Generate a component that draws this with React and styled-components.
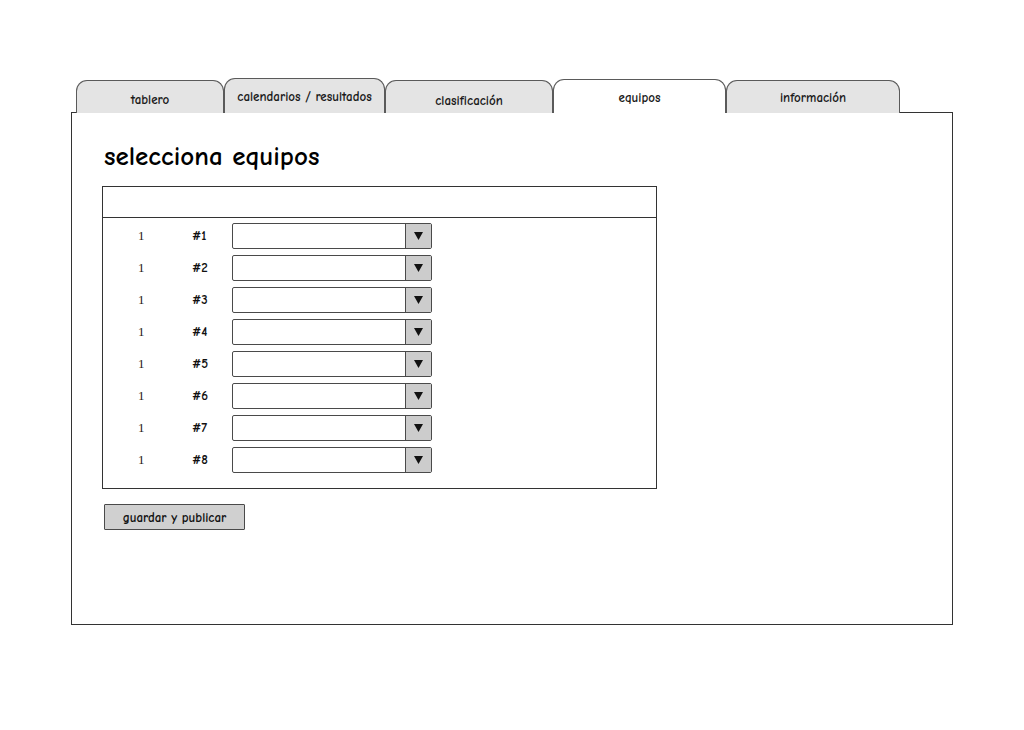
import React from "react";
import styled, { createGlobalStyle } from "styled-components";

const Global = createGlobalStyle`
  html, body { margin: 0; padding: 0; background: #fff; }
  body { font-family: "Comic Sans MS", "Comic Neue", "DejaVu Sans", sans-serif; color: #111; }
`;

const Page = styled.div`
  width: 1024px;
  height: 730px;
  padding: 79px 0 0 71px;
  box-sizing: border-box;
`;

const TabBar = styled.div`
  display: flex;
  align-items: flex-end;
  height: 34px;
  padding-left: 5px;
  position: relative;
  z-index: 1;
  margin-bottom: -1px;
`;

const Tab = styled.div`
  box-sizing: border-box;
  width: ${(p) => p.$w}px;
  height: ${(p) => 33 + p.$lift}px;
  border: 1px solid #5a5a5a;
  border-bottom: none;
  border-radius: 11px 11px 0 0;
  background: ${(p) => (p.$active ? "#ffffff" : "#e4e4e4")};
  font-size: 13px;
  font-weight: 700;
  text-align: center;
  padding-top: ${(p) => p.$text}px;
  color: #1a1a1a;
  white-space: nowrap;
`;

const Panel = styled.div`
  box-sizing: border-box;
  width: 882px;
  height: 513px;
  border: 1px solid #333;
  padding: 29px 0 0 30px;
`;

const Title = styled.h1`
  margin: 0 0 14px 2px;
  font-size: 27px;
  font-weight: 700;
  line-height: 30px;
  color: #000;
`;

const TableBox = styled.div`
  box-sizing: border-box;
  width: 555px;
  height: 303px;
  border: 1px solid #333;
`;

const TableHeader = styled.div`
  height: 30px;
  border-bottom: 1px solid #333;
`;

const Rows = styled.div`
  padding-top: 5px;
  display: flex;
  flex-direction: column;
  gap: 6px;
`;

const Row = styled.div`
  display: grid;
  grid-template-columns: 54px 40px 200px;
  align-items: center;
  padding-left: 35px;
  height: 26px;
  font-size: 13px;
  font-weight: 700;
`;

const Num = styled.span`
  font-family: "Liberation Serif", "DejaVu Serif", serif;
  font-size: 13px;
  font-weight: normal;
  color: #2a1a10;
`;

const Seed = styled.span`
  margin-top: -2px;
`;

const Select = styled.div`
  box-sizing: border-box;
  height: 26px;
  border: 1px solid #4a4a4a;
  border-radius: 2px;
  display: flex;
  justify-content: flex-end;
  background: #fff;
  overflow: hidden;
`;

const Arrow = styled.div`
  width: 25px;
  background: #cccccc;
  border-left: 1px solid #4a4a4a;
  display: flex;
  align-items: center;
  justify-content: center;
`;

const Button = styled.button`
  box-sizing: border-box;
  margin: 15px 0 0 2px;
  width: 141px;
  height: 26px;
  border: 1px solid #4a4a4a;
  border-radius: 1px;
  background: #d0d0d0;
  font-family: inherit;
  font-size: 13px;
  font-weight: 700;
  color: #111;
  padding: 0;
`;

const tabs = [
  { label: "tablero", w: 148, lift: 0, text: 11 },
  { label: "calendarios / resultados", w: 161, lift: 2, text: 10 },
  { label: "clasificación", w: 168, lift: 0, text: 12 },
  { label: "equipos", w: 173, lift: 1, text: 10, active: true },
  { label: "información", w: 174, lift: 0, text: 9 },
];

export default function App() {
  return (
    <Page>
      <Global />
      <TabBar>
        {tabs.map((t) => (
          <Tab key={t.label} $w={t.w} $lift={t.lift} $text={t.text} $active={t.active}>
            {t.label}
          </Tab>
        ))}
      </TabBar>
      <Panel>
        <Title>selecciona equipos</Title>
        <TableBox>
          <TableHeader />
          <Rows>
            {[1, 2, 3, 4, 5, 6, 7, 8].map((n) => (
              <Row key={n}>
                <Num>1</Num>
                <Seed>#{n}</Seed>
                <Select>
                  <Arrow>
                    <svg width="9" height="8" viewBox="0 0 9 8">
                      <path d="M0 0 L9 0 L4.5 8 Z" fill="#111" />
                    </svg>
                  </Arrow>
                </Select>
              </Row>
            ))}
          </Rows>
        </TableBox>
        <Button>guardar y publicar</Button>
      </Panel>
    </Page>
  );
}
